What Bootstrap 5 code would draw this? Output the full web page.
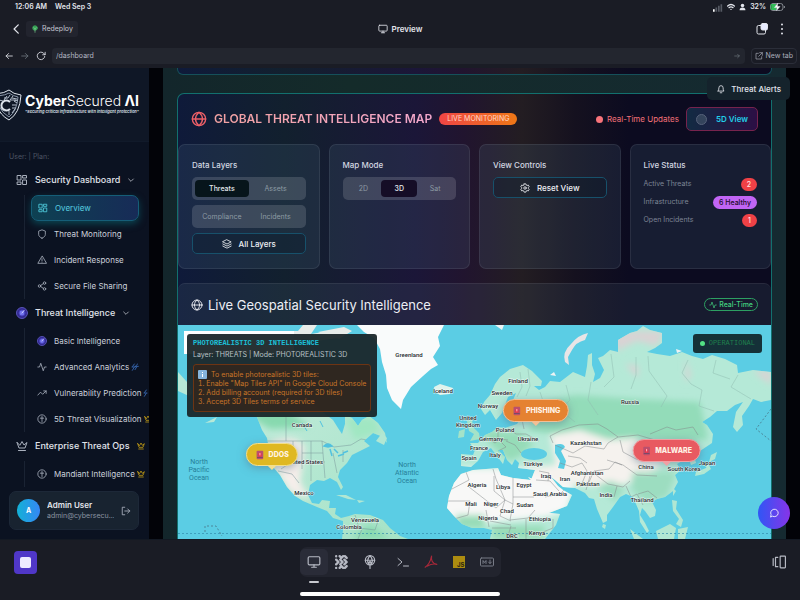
<!DOCTYPE html>
<html lang="en" data-bs-theme="dark">
<head>
<meta charset="utf-8">
<meta name="viewport" content="width=device-width, initial-scale=1">
<title>CyberSecured AI – Dashboard</title>
<link rel="stylesheet" href="https://cdn.jsdelivr.net/npm/bootstrap@5.3.0/dist/css/bootstrap.min.css">
<style>
body{background:#1a1c25;color:#e3e5ec;font-family:Inter,"Noto Sans",sans-serif;font-size:8px;line-height:12px;height:100vh;min-height:480px;overflow:hidden}
button{color:inherit;font-size:inherit;line-height:inherit}
svg.ico{width:10px;height:10px;fill:none;stroke:currentColor;stroke-width:2;stroke-linecap:round;stroke-linejoin:round;flex:none}
svg.i8{width:8px;height:8px}
svg.i12{width:12px;height:12px}
svg.i14{width:14px;height:14px}
svg.i15{width:15px}
svg.i16{width:16px;height:16px}
svg.thick{stroke-width:4}
svg.tick{color:#e5b712;margin-left:-5px}
svg.spark{color:#4787e5;margin-left:-5px}
.plain{background:none;border:0;padding:0;display:inline-flex;align-items:center}
a{color:inherit;text-decoration:none}
/* device and workspace bars */
.statusbar{height:14px;padding:0 15px;font-size:7px;font-weight:600}
.topbar{height:30px;padding:0 12px}
.redeploy{height:16px;padding:0 5px;gap:3px;background:#22242e;border-radius:3px;font-size:7px;color:#c4c7d2}
.preview-name{font-size:8px;font-weight:600}
.addressbar{height:24px;padding:0 3px 0 4px;gap:6px}
.urlbox{background:#23262f;border-radius:4px;height:16px}
.urlbox input{background:none;border:0;outline:0;color:#b4b8c4;font-size:7px;padding:0 4px}
.newtab{height:16px;padding:0 3px;gap:3px;border:1px solid #2b2e39;border-radius:4px;font-size:7px;color:#a9adb9}
/* sidebar */
.stage{background:#020308}
.sidebar{width:149px;background:#0b1221;overflow:hidden}
.brand{height:74px;background:#0f1726;border-bottom:1px solid #111a2a;gap:3px}
.brand-name{font-size:14px;line-height:15px;font-weight:700;color:#fff;white-space:nowrap}
.brand-name span{font-weight:300}
.brand-tag{font-size:4px;line-height:8px;font-weight:600;font-style:italic;color:#dfe2ea;white-space:nowrap}
.plan{font-size:7px;color:#4d5564;padding:9px 9px 3px}
.grp{height:28px;padding-left:16px;gap:7px;font-size:9px;font-weight:500;color:#e1e4eb;white-space:nowrap}
.grp>svg:first-child{color:#a9b0bd}
.sub{margin:1px 0 0 24px;padding:0;position:relative;border-left:1px solid #1a2333}
.sub a{height:26px;padding-left:12px;gap:7px;font-size:8px;color:#ccd1db;white-space:nowrap;display:flex;align-items:center}
.sub a>svg:first-child{color:#a6adba}
.sub a.on{margin:0 10px 0 6px;padding-left:6px;border:1px solid #155e78;border-radius:7px;background:linear-gradient(90deg,#0e4152,#172b57);color:#58cfe0;box-shadow:0 3px 7px #0b4350}
.sub a.on>svg:first-child{color:#50cfe0}
.usercard{position:absolute;left:9px;right:10px;bottom:9px;height:39px;border-radius:7px;background:#182330;border:1px solid #1d2838;padding:0 7px;gap:7px}
.avatar{width:23px;height:23px;border-radius:50%;background:linear-gradient(90deg,#13b1d6,#3687f5);color:#fff;font-weight:700;font-size:7px}
.uname{font-size:8px;font-weight:600;line-height:11px}
.umail{font-size:7px;line-height:10px;color:#8a93a1}
.signout{color:#aeb6c3}
/* main */
.mainarea{background:linear-gradient(90deg,#13262b,#142b2a 30%,#152a31);margin:0 14px;padding:0 14px}
.tint{background:linear-gradient(90deg,#0f1a3a 0%,#12202e 18%,#1b1638 40%,#21142f 48%,#231d22 58%,#15111f 67%,#0c0b20 76%,#0c0b20 100%)}
.prevcard{height:7px;border:1px solid #15505a;border-top:0;border-radius:0 0 6px 6px}
.panel{margin-top:18px;border:1px solid #12706e;border-bottom:0;border-radius:7px 7px 0 0}
.panel-head{height:50px;padding:0 13px;gap:7px}
.panel-head h1{font-size:12px;line-height:14px;font-weight:600;margin:0;white-space:nowrap;background:linear-gradient(90deg,#f2a1a1,#f3a8cd);-webkit-background-clip:text;background-clip:text;color:transparent}
.globe-red{color:#ee6068}
.live{background:linear-gradient(90deg,#ef4545,#ee7716);color:#ffd9c9;font-size:7px;line-height:12px;padding:0 8px;border-radius:6px;white-space:nowrap}
.rt{color:#f27178;font-size:8px;gap:4px;white-space:nowrap}
.dot{width:7px;height:7px;border-radius:50%;background:#f8737a;flex:none}
.fived{height:24px;padding:0 9px;gap:9px;border:1px solid #76234d;border-radius:5px;background:linear-gradient(90deg,#122b43,#2c0f45);color:#22cfe9;font-size:8px;font-weight:600;white-space:nowrap}
.orb{width:11px;height:11px;border-radius:50%;background:#34445c;border:1px solid #56617a}
.ctrls{display:grid;grid-template-columns:repeat(4,minmax(0,1fr));gap:9px}
.pane{height:125px;padding:14px 13px;border:1px solid #ffffff14;border-radius:7px;background:#5379902b}
.pane h2{font-size:8px;line-height:12px;font-weight:500;margin:0 0 6px;color:#d3d7e1}
.seg{height:23px;padding:3px;border-radius:5px;background:#ffffff24;margin-bottom:5px;font-size:7px;color:#8d9ba4}
.seg button{flex:1 1 0;justify-content:center;border-radius:4px}
.seg .on{background:#07151b;color:#e5e8ec;font-weight:500}
.seg.violet .on{background:#150d26}
.outl{width:100%;height:21px;border:1px solid #17516b;border-radius:5px;background:#0a182655;justify-content:center;gap:7px;font-size:8px;font-weight:500;color:#eef0f4}
.stat{height:18px;font-size:7px;color:#7d8494}
.pill{border-radius:8px;background:#ef4146;color:#ffe1e1;line-height:13px;padding:0 6px;font-size:7px;font-weight:500}
.pill.healthy{background:#c165f5;color:#1a0b2a}
.geo{margin-top:14px}
.geo-head{height:42px;padding:0 13px;gap:5px;border-top:1px solid #ffffff12;border-radius:7px 7px 0 0;background:#4c63752e}
.geo-head h2{font-size:13px;line-height:18px;font-weight:400;margin:0;white-space:nowrap;color:#eceef5}
.realtime{height:13px;padding:0 4px;gap:2px;border:1px solid #2d9f62;border-radius:7px;color:#43d27f;font-size:7px;font-weight:500;white-space:nowrap}
.map{background:#5bcde4;position:relative;overflow:hidden;min-height:0}
.map>svg{position:absolute;width:100%;height:100%}
.map text{font-family:Roboto,sans-serif;font-size:6px;font-weight:500;fill:#222a2d;text-anchor:middle;paint-order:stroke;stroke:#fffc;stroke-width:1px;stroke-linejoin:round}
.map text.sea{font-size:7px;font-weight:400;fill:#267f99;stroke:none}
.intel{position:absolute;left:9px;top:9px;width:190px;height:83px;padding:5px 6px;background:#192428ef;border-radius:3px}
.mono{font-family:"Liberation Mono",monospace;font-size:7px;line-height:9px}
.intel .mono{color:#1cc0d8;font-weight:700}
.layerline{font-size:7px;line-height:14px;color:#b9c2c6;white-space:nowrap}
.howto{margin-top:2px;border:1px solid #6d3413;border-radius:3px;background:#35251bcc;color:#c87528;padding:5px 2px 5px 4px;font-size:7px;line-height:9px;white-space:nowrap}
.howto ol{margin:0;padding:0;list-style-position:inside}
.oper{position:absolute;right:9px;top:9px;height:19px;padding:0 7px;gap:4px;border-radius:3px;background:#132b31f5;color:#1f804d}
.oper .dot{width:5px;height:5px;background:#53e184}
.pin{position:absolute;height:23px;padding:0 8px;border:1px solid #fff9;border-radius:12px;color:#fff3e6;font-size:7px;font-weight:800;gap:4px;box-shadow:0 2px 8px #5a778b88;transform:translateX(-50%)}
.pin svg{stroke-width:1}
.pin:after{content:"";position:absolute;left:50%;top:100%;margin-left:-5px;border:5px solid transparent;border-bottom:0;border-top-color:inherit}
.pin.y{background:#dfb822;border-color:#f2df8d;left:15.8%;top:118px}
.pin.o{background:#e58231;border-color:#f2bf95;left:60.4%;top:74px}
.pin.r{background:#e85a61;border-color:#f0a0a4;left:82.4%;top:114px}
.alerts{position:absolute;right:10px;top:9px;height:23px;padding:0 9px;gap:5px;background:#15232c;border-radius:5px;font-size:8px;font-weight:500}
.chat{position:absolute;right:10px;bottom:10px;width:32px;height:32px;border-radius:50%;background:linear-gradient(90deg,#3056f5,#8734e8);justify-content:center;color:#fff}
/* dock */
.dockbar{height:61px;padding:7px 14px 0;border-top:1px solid #131923}
.side{flex:1 1 0}
.dock{height:30px;border-radius:7px;background:#22242e}
.dock button{width:28px;height:26px;border-radius:5px;justify-content:center;color:#b6b9c3}
.dock .on{background:#2a2c38}
.dock .split{margin-left:5px}
.under{width:10px;height:2px;border-radius:1px;background:#c8cad0;margin:4px 0 0 9px}
.home{width:200px;height:4px;border-radius:2px;background:#fff;margin:9px 0 0}
.stopbtn{width:23px;height:23px;border-radius:4px;background:#5037c8;justify-content:center}
.stopbtn span{width:11px;height:11px;border-radius:2px;background:#eeeaff}
.c-red{color:#a62839}
.c-gray{color:#777b86}
</style>
<script src="https://cdn.jsdelivr.net/npm/bootstrap@5.3.0/dist/js/bootstrap.bundle.min.js"></script>
</head>
<body class="d-flex flex-column">
<svg width="0" height="0" class="position-absolute" aria-hidden="true">
<symbol id="grid" viewBox="0 0 24 24"><path d="M3 3h7v9H3zM14 3h7v5h-7zM14 12h7v9h-7zM3 16h7v5H3z"/></symbol>
<symbol id="shield" viewBox="0 0 24 24"><path d="M12 22c5-2 8-5 8-9V5l-8-3-8 3v8c0 4 3 7 8 9z"/></symbol>
<symbol id="warn" viewBox="0 0 24 24"><path d="M12 3 2 20h20zM12 9v5M12 17v.2"/></symbol>
<symbol id="share" viewBox="0 0 24 24"><circle cx="18" cy="5" r="3"/><circle cx="6" cy="12" r="3"/><circle cx="18" cy="19" r="3"/><path d="m9 13.500 6 4M15 6.500l-6 4"/></symbol>
<symbol id="down" viewBox="0 0 24 24"><path d="m5 9 7 7 7-7"/></symbol>
<symbol id="pulse" viewBox="0 0 24 24"><path d="M22 12h-4l-3 9L9 3l-3 9H2"/></symbol>
<symbol id="trend" viewBox="0 0 24 24"><path d="m2 17 6.500-7 5 5L22 7M16 7h6v6"/></symbol>
<symbol id="brain" viewBox="0 0 24 24"><circle cx="12" cy="12" r="10"/><path d="M12 6v12M8 10h8"/></symbol>
<symbol id="crown" viewBox="0 0 24 24"><path d="m2 5 4 11h12l4-11-6 5-4-7-4 7zM5 21h14"/></symbol>
<symbol id="globe" viewBox="0 0 24 24"><circle cx="12" cy="12" r="10"/><path d="M2 12h20M12 2c-7 6-7 14 0 20M12 2c7 6 7 14 0 20"/></symbol>
<symbol id="target" viewBox="0 0 24 24"><circle cx="12" cy="12" r="11" fill="#332a91" stroke="#5955b8"/><circle cx="12" cy="12" r="6" fill="#7173ed" stroke="#4641bd"/><path d="m12 12 4-5" stroke="#d0d2ff"/></symbol>
<symbol id="screen" viewBox="0 0 24 24"><rect x="2" y="3" width="20" height="14" rx="2"/><path d="M8 21h8M12 17v4"/></symbol>
<symbol id="siren" viewBox="0 0 12 12"><rect x="2" y="1" width="8" height="10" rx="1" fill="#b9506e" stroke="none"/><path d="M4 8V5q0-2 2-2t2 2v3z" fill="#e8364c" stroke="none"/><path d="M3 9h6" stroke="#6d4a68"/><path d="M6 4v2" stroke="#ffe0e4"/></symbol>
</svg>

<div class="statusbar d-flex align-items-center justify-content-between">
  <div><span class="me-2">12:06 AM</span><span>Wed Sep 3</span></div>
  <div class="d-flex align-items-center gap-1">
    <svg width="10" height="9" viewBox="0 0 12 10"><path fill="#fff" d="M0 7h2v3H0z"/><path fill="#565a64" d="M3 5h2v5H3zM6 3h2v7H6zM9 1h2v9H9z"/></svg>
    <svg class="ico i8 thick" viewBox="0 0 24 24"><path d="M2 9q10-9 20 0M6 14q6-5 12 0M12 19v.2"/></svg>
    <svg width="7" height="8" viewBox="0 0 24 24"><circle cx="12" cy="7" r="6" fill="#e3e5ec"/><path fill="#e3e5ec" d="M2 23q0-9 10-9t10 9z"/></svg>
    <span>32%</span>
    <svg class="ico i15" viewBox="0 0 30 18"><rect x="1" y="2" width="25" height="14" rx="5" stroke="#868b93"/><path d="M3 4h9v10H3z" fill="#32bd58" stroke="#32bd58"/><path d="m15 2-6 8h5l-1 6 7-8h-5z" fill="#fff" stroke-width="1"/><path d="M29 8v2" stroke="#868b93"/></svg>
  </div>
</div>

<header class="topbar d-flex align-items-center">
  <div class="side d-flex align-items-center gap-1">
    <button class="plain" aria-label="Back"><svg class="ico" viewBox="0 0 24 24"><path stroke-width="3" d="M15 2 5 12l10 10"/></svg></button>
    <button class="plain redeploy"><svg class="ico i8" viewBox="0 0 24 24"><circle cx="12" cy="9" r="7" fill="#2d9c4c" stroke="#43b563"/><path d="M12 8v14M8 8l4 5 4-5" stroke="#7cc890"/></svg>Redeploy</button>
  </div>
  <div class="d-flex align-items-center gap-1 preview-name"><svg class="ico"><use href="#screen"/></svg>Preview</div>
  <div class="side d-flex align-items-center justify-content-end gap-2">
    <button class="plain" aria-label="Windows"><svg class="ico i12" viewBox="0 0 24 24"><path d="M10 5H5a3 3 0 0 0-3 3v11a3 3 0 0 0 3 3h11a3 3 0 0 0 3-3v-5"/><rect x="10" y="1" width="13" height="13" rx="3" fill="#e8ebff"/></svg></button>
    <button class="plain" aria-label="More"><svg class="ico i12 thick" viewBox="0 0 24 24"><path d="M12 3v.1M12 12v.1M12 21v.1"/></svg></button>
  </div>
</header>

<div class="addressbar d-flex align-items-center">
  <button class="plain" aria-label="Previous page"><svg class="ico" viewBox="0 0 24 24"><path d="M20 12H5M11 6l-6 6 6 6"/></svg></button>
  <button class="plain text-secondary" aria-label="Next page"><svg class="ico" viewBox="0 0 24 24"><path d="M4 12h15M13 6l6 6-6 6"/></svg></button>
  <button class="plain" aria-label="Reload"><svg class="ico" viewBox="0 0 24 24"><path d="M21 13a9 9 0 1 1-3-8l4 4M22 3v6h-6"/></svg></button>
  <div class="urlbox flex-grow-1 d-flex align-items-center pe-1">
    <input class="flex-grow-1" type="text" value="/dashboard" aria-label="Address">
    <button class="plain text-secondary" aria-label="Go"><svg class="ico i8" viewBox="0 0 24 24"><path d="M5 12h14M14 7l5 5-5 5"/></svg></button>
  </div>
  <button class="plain newtab"><svg class="ico i8" viewBox="0 0 24 24"><path d="M10 4H3v17h17v-7M14 2h8v8M22 2 11 13"/></svg>New tab</button>
</div>

<div class="stage d-flex flex-grow-1 position-relative overflow-hidden">
  <nav class="sidebar position-relative flex-shrink-0" aria-label="Sections">
    <div class="brand d-flex align-items-center">
      <svg width="22" height="32" viewBox="0 0 22 32" fill="none" stroke="#dfe5ed" stroke-width="1"><path d="M-4 5Q5 4 9 1q4 4 12 5-1 18-12 25Q0 26-3 17z"/><path d="M-2 7Q6 6 9 4q4 3 9 4-1 14-9 20-7-4-10-11" stroke="#8793a5"/><path d="M10 13a5 5 0 1 0 0 7" stroke-width="2"/><path d="M4 9h4l2-3M13 7l-3 4h6M18 11l-4 1 3 2M16 16h-4M16 19h-4M9 26v-4M12 24l3-4M3 12l-4-1M5 22l-4-2M7 7l-3 4M12 9l5 1" stroke="#b3bdca"/></svg>
      <div><div class="brand-name">Cyber<span>Secured</span> ΛI</div><div class="brand-tag">"Securing critical infrastructure with intelligent protection"</div></div>
    </div>
    <div class="plan">User: | Plan:</div>
    <a class="grp d-flex align-items-center" href="#"><svg class="ico i12"><use href="#grid"/></svg>Security Dashboard<svg class="ico i8 ms-n1"><use href="#down"/></svg></a>
    <div class="sub">
      <a class="on" href="#"><svg class="ico"><use href="#grid"/></svg>Overview</a>
      <a href="#"><svg class="ico"><use href="#shield"/></svg>Threat Monitoring</a>
      <a href="#"><svg class="ico"><use href="#warn"/></svg>Incident Response</a>
      <a href="#"><svg class="ico"><use href="#share"/></svg>Secure File Sharing</a>
    </div>
    <a class="grp d-flex align-items-center" href="#"><svg class="ico i12"><use href="#target"/></svg>Threat Intelligence<svg class="ico i8"><use href="#down"/></svg></a>
    <div class="sub">
      <a href="#"><svg class="ico"><use href="#target"/></svg>Basic Intelligence</a>
      <a href="#"><svg class="ico"><use href="#pulse"/></svg>Advanced Analytics<svg class="ico i8 spark" viewBox="0 0 24 24"><path d="m4 22 5-8M12 20l5-8M5 10l5-7M14 9l6-6M3 12h9M12 10h10"/></svg></a>
      <a href="#"><svg class="ico"><use href="#trend"/></svg>Vulnerability Prediction<svg class="ico i8 spark" viewBox="0 0 24 24"><path d="m4 22 5-8M5 10l5-7M3 12h9"/></svg></a>
      <a href="#"><svg class="ico"><use href="#brain"/></svg>5D Threat Visualization<svg class="ico i8 tick"><use href="#crown"/></svg></a>
    </div>
    <a class="grp d-flex align-items-center" href="#"><svg class="ico i12"><use href="#crown"/></svg>Enterprise Threat Ops<svg class="ico i8 tick ms-0"><use href="#crown"/></svg></a>
    <div class="sub">
      <a href="#"><svg class="ico"><use href="#brain"/></svg>Mandiant Intelligence<svg class="ico i8 tick"><use href="#crown"/></svg></a>
    </div>
    <div class="usercard d-flex align-items-center">
      <span class="avatar d-flex align-items-center justify-content-center flex-shrink-0">A</span>
      <div class="flex-grow-1 overflow-hidden"><div class="uname">Admin User</div><div class="umail">admin@cybersecu...</div></div>
      <button class="plain signout" aria-label="Sign out"><svg class="ico" viewBox="0 0 24 24"><path d="M9 3H3v18h6M16 7l5 5-5 5M21 12H9"/></svg></button>
    </div>
  </nav>

  <main class="mainarea flex-grow-1 d-flex flex-column overflow-hidden">
    <div class="prevcard tint flex-shrink-0"></div>
    <section class="panel tint flex-grow-1 d-flex flex-column">
      <div class="panel-head d-flex align-items-center flex-shrink-0">
        <svg class="ico i16 globe-red"><use href="#globe"/></svg>
        <h1>GLOBAL THREAT INTELLIGENCE MAP</h1>
        <span class="live">LIVE MONITORING</span>
        <span class="rt d-flex align-items-center ms-auto"><span class="dot"></span>Real-Time Updates</span>
        <button class="plain fived"><span class="orb"></span>5D View</button>
      </div>
      <div class="ctrls flex-shrink-0">
        <div class="pane">
          <h2>Data Layers</h2>
          <div class="seg d-flex"><button class="plain on">Threats</button><button class="plain">Assets</button></div>
          <div class="seg d-flex"><button class="plain">Compliance</button><button class="plain">Incidents</button></div>
          <button class="plain outl"><svg class="ico" viewBox="0 0 24 24"><path d="m12 2 10 5-10 5L2 7zM2 12l10 5 10-5M2 17l10 5 10-5"/></svg>All Layers</button>
        </div>
        <div class="pane">
          <h2>Map Mode</h2>
          <div class="seg violet d-flex"><button class="plain">2D</button><button class="plain on">3D</button><button class="plain">Sat</button></div>
        </div>
        <div class="pane">
          <h2>View Controls</h2>
          <button class="plain outl"><svg class="ico" viewBox="0 0 24 24"><path d="M10 2h4l1 3 2 1 3-1 2 4-2 2v2l2 2-2 4-3-1-2 1-1 3h-4l-1-3-2-1-3 1-2-4 2-2v-2L2 9l2-4 3 1 2-1z"/><circle cx="12" cy="12" r="3"/></svg>Reset View</button>
        </div>
        <div class="pane">
          <h2 class="mb-1">Live Status</h2>
          <div class="stat d-flex align-items-center justify-content-between">Active Threats<span class="pill">2</span></div>
          <div class="stat d-flex align-items-center justify-content-between">Infrastructure<span class="pill healthy">6 Healthy</span></div>
          <div class="stat d-flex align-items-center justify-content-between">Open Incidents<span class="pill">1</span></div>
        </div>
      </div>
      <div class="geo flex-grow-1 d-flex flex-column">
        <div class="geo-head d-flex align-items-center flex-shrink-0">
          <svg class="ico i12"><use href="#globe"/></svg><h2>Live Geospatial Security Intelligence</h2>
          <span class="realtime d-flex align-items-center ms-auto"><svg class="ico i8"><use href="#pulse"/></svg>Real-Time</span>
        </div>
        <div class="map flex-grow-1">
          <svg viewBox="178 325 593 214" preserveAspectRatio="xMidYMid slice" role="img" aria-label="World map">
            <defs>
              <linearGradient id="na" x1="0" x2="1" y1="0" y2="1"><stop offset="0" stop-color="#a5e5c8"/><stop offset=".3" stop-color="#c1ebdb"/><stop offset="1" stop-color="#a4e2c5"/></linearGradient>
              <filter id="soft" x="-20%" y="-20%" width="140%" height="140%"><feGaussianBlur stdDeviation="3"/></filter>
              <clipPath id="nac"><path d="M205 400 240 406 257 417 262 430 267 438 270 455 273 467 280 475 287 487 295 496 303 501 317 507 327 511 333 518 343 521 343 530 342 539H408L400 536 390 528 383 520 370 515 355 514 349 516 341 518 335 514 336 508 329 508 330 501 322 500 319 504 312 503 308 495 310 485 317 480 324 481 330 478 337 482 341 490 343 487 338 477 340 470 347 463 352 455 362 450 370 446 364 441 373 433 383 437 387 443 385 433 378 423 369 416 362 420 358 426 352 418 345 415 345 424 342 434 338 428 333 420 320 410 300 390H230z"/></clipPath>
              <clipPath id="eac"><path d="M481 409 484 402 490 395 495 384 500 377 510 369 523 365 532 371 542 381 541 386 534 386 539 390 545 387 550 381 560 382 573 372 585 377 587 366 588 355 592 353 592 365 595 374 593 382 600 378 604 370 598 358 603 356 610 350 618 352 618 340 630 333 637 331 643 326 650 330 662 333 662 343 655 348 647 352 657 354 670 356 682 352 692 356 703 359 712 355 725 359 737 365 738 373 753 370 771 372V400L761 402 753 399 749 406 742 416 743 425 737 432 733 427 736 412 743 402 735 405 727 411 717 411 710 417 702 422 707 425 713 434 712 443 703 449 694 455 696 463 691 465 688 456 680 455 684 460 677 464 681 470 675 475 678 482 673 491 665 497 657 499 652 502 656 510 655 516 650 518 645 511 642 508 640 515 645 523 649 531 647 533 640 522 639 511 633 497 626 494 620 497 613 507 607 515 607 521 603 523 597 509 594 499 589 498 585 493 575 488 563 487 555 480 551 477 558 486 563 490 572 495 567 506 549 513 544 505 538 494 531 480 528 477 535 480 542 498 551 513 560 514 556 525 545 539H490L492 530 484 528 472 528 462 524 454 516 447 508 449 496 454 483 461 474 473 470 486 469 498 468 501 475 513 478 531 480 535 470 518 468 519 463 515 459 512 465 507 460 503 450 498 450 505 457 503 464 497 456 491 448 483 452 478 461 471 467 461 466 461 454 473 455 475 450 470 443 478 443 485 435 492 432 498 427 505 428 517 424 522 416 529 411 520 411 511 405 516 393 508 397 502 413 496 420 490 410 485 415z"/></clipPath>
            </defs>
            <g clip-path="url(#nac)"><path d="M178 325h240v214H178z" fill="url(#na)"/><g filter="url(#soft)"><path d="M270 442q25-10 35 5l-5 35 10 17-20-7-22-34z" fill="#f5eeea"/><path d="M230 405h50l30 22-40 2zM340 450l-10 27M370 525l20 14h-40z" fill="#87d9af"/><path d="M345 418h30l5 14-25 8z" fill="#a0e7c2"/></g>
              <path d="M264 441h58l12 6 17-2 10-6 13 2M286 417v24M293 441v20l-12 8M302 441v28M311 441v40M322 441l3 37M302 453h21M293 462h32M278 471l14 3 7 9M333 453l4 20M343 450v12M355 515l4 13 16 2 3-9M362 529l-4 10" fill="none" stroke="#78969a" stroke-width=".5"/>
              <path d="M324 446q4-4 8 0l-4 1zM330 449l2 7M334 449l4 4M338 456l6-2M343 453l5-2" fill="#52c2df" stroke="#52c2df" stroke-width="1.500"/><path d="M320 421l3 6M302 423l5 8" stroke="#52c2df"/></g>
            <path d="M357 325 364 332 374 338 380 349 382 362 386 375 387 388 392 400 401 409 403 400 411 387 423 376 431 369 438 365 433 357 440 346 438 337 444 325z" fill="#f9fbfb"/>
            <path d="M178 372l9 10q9 12 2 14l-11-5z" fill="#b7e8d7"/><path d="M205 423l12-6-3 5z" fill="#b7e8d7"/><path d="M275 331h23l5-6h14l-6 9 18-3 9 7-22 3-12-2-16 5zM318 332l26-5 8 4-13 8z" fill="#e8ece9"/>
            <path d="M434 387l6-3 13 4-3 6-10 1-5-3z" fill="#dff3ec"/>
            <path d="M467 421l5-2 1 8 6 6 1 6-10 2 4-7-5-3zM459 431l6-2-1 8-6 1z" fill="#a4e3c8"/>
            <g clip-path="url(#eac)"><path d="M440 325h331v214H440z" fill="#b5e9d7"/>
              <g filter="url(#soft)"><path d="M545 402l30-7 60 4 65 3 8 37-30 4-40-5-50 2-60-10z" fill="#93dcb9"/><path d="M440 468h92l42 18-7 25-20 6-65 6-42-3z" fill="#f8f8f7"/><path d="M550 435l30-5 30 10 25-2 15 14 16 5-10 12-33 16-27 1-35-3-25-6-10-10 30-2z" fill="#f5f2ee"/><path d="M612 331h53l-8 15-20-5-20 10zM625 364l13 2v12zM685 358l6 17-5 8zM704 395l12 12M753 371h18v14z" fill="#d9d3d4"/><path d="M632 472h45l-10 25-20 6-15-13zM596 486l14-5 15 5-9 16z" fill="#9cddc0"/><path d="M492 526h52v13h-52zM455 515h30v13h-25z" fill="#97dcb7"/><path d="M481 430l38 2 15 12-15 13-10 4-17-15z" fill="#96dcb8"/></g>
              <ellipse cx="534" cy="454" rx="13" ry="6" fill="#5bcde4"/><path d="M555 445q8-3 10 2l-4 4 5 10-2 8-6-1 2-7-5-8z" fill="#5bcde4"/>
              <g fill="none" stroke="#85898b" stroke-width=".5"><path d="M466 472l3 8-19 10M469 487l27 21 9-8-9-21-3-10M448 501h22l-2 14-14 4M494 476v15l11 9M513 478v19h21M505 500l8 4v-7M505 500l-5 16 11 5M513 504l-3 16 18-2 7-8M486 510l3 17M490 521l21 4M526 519v20M511 526l-4 13M553 519v9l-10 4M492 528h24M536 480l14 1 9 10M545 497l15-3 6-6M539 471l10 2-1 8M560 463l12 4 10-4 5 8-6 15M568 456l12 2 7 5M580 486l9-4 5-11 15-2 6-7 7 3M596 475l12 9 15 3 7-6M617 486l-3 11M626 486l5 11 6-3 6 11M638 494l10-3 9 7M590 476l-4 14"/><path d="M553 443l-3-7 12-6 17-5 19-1 9 5 11 8-10 6-4 6-19-3-12 7-18-8M618 437l20-2 17 5 19 3 8-3M620 440l3 12 13 7 24 1 14-8 3-9M650 434l17-7 9 3 17-3 5 8M607 460l16 5 14 10 20 1M485 437l10 6 4-3 7 7-8 4M498 427v12l10 1M508 428l8 6 10 0 13 7M506 441l9 4 6 8M521 415l3 14"/><path d="M520 372l2 15-5 10M528 369l2 17-4 10M540 392l5 15-7 10M566 385l4 15-10 10 15 12M591 382l-3 18 10 15M611 354l3 23-10 10M636 357v18l-5 14M648 356l1 15 18 25-6 11M688 360l-6 13 9 11 11 6-3 16 15 5M716 360l-3 13 17 6M738 375l-7 12 20 12" stroke="#91bdb0"/></g></g>
            <path d="M565 362q-3-10 6-18 7-9 17-11l-3 7q-9 2-13 10l-4 7 1 8z" fill="#e8e5e6"/><path d="M495 325h9l-2 5zM550 375l4-3 2 4zM676 349l6 2-5 2z" fill="#eef3f3"/>
            <path d="M711 455l6-3-2 7-6 3zM708 463l3 6-7 5-9 2 1-4 10-4zM673 488l3 3-3 5zM672 500l5 1-1 8 7 11-2 7-5-3 3-5-6-8zM656 531l14-7 6 4-2 11h-16zM630 529l13 10h-9zM678 529l10-2-3 12h-7zM336 495l10 0 10 5-8-1zM357 500l8 1-6 2zM382 433l5 5-3 7-8-4zM603 524l3 1-1 4-3-2z" fill="#b1e7d3"/>
            <g stroke="#328cae" fill="none" stroke-dasharray="2 2" stroke-width=".7"><path d="M178 533.500h593"/><path d="M205 532v-6h11l6 10M771 409l-15 20 15 12" stroke="#456c7b"/></g>
            <g><text x="409" y="357">Greenland</text><text x="443" y="393">Iceland</text><text x="518" y="383">Finland</text><text x="502" y="395">Sweden</text><text x="488" y="408">Norway</text><text x="630" y="404">Russia</text><text x="468" y="420">United</text><text x="468" y="427">Kingdom</text><text x="505" y="432">Poland</text><text x="491" y="441">Germany</text><text x="528" y="441">Ukraine</text><text x="479" y="450">France</text><text x="495" y="457">Italy</text><text x="469" y="460">Spain</text><text x="533" y="466">Türkiye</text><text x="586" y="445">Kazakhstan</text><text x="587" y="475">Afghanistan</text><text x="588" y="486">Pakistan</text><text x="546" y="478">Iraq</text><text x="565" y="481">Iran</text><text x="524" y="487">Egypt</text><text x="503" y="489">Libya</text><text x="477" y="487">Algeria</text><text x="550" y="496">Saudi Arabia</text><text x="606" y="497">India</text><text x="642" y="502">Thailand</text><text x="646" y="469">China</text><text x="684" y="471">South Korea</text><text x="707" y="465">Japan</text><text x="471" y="506">Mali</text><text x="491" y="506">Niger</text><text x="507" y="513">Chad</text><text x="525" y="507">Sudan</text><text x="488" y="520">Nigeria</text><text x="540" y="521">Ethiopia</text><text x="537" y="535">Kenya</text><text x="512" y="538">DRC</text><text x="302" y="427">Canada</text><text x="305" y="464">United States</text><text x="304" y="495">Mexico</text><text x="365" y="522">Venezuela</text><text x="349" y="529">Colombia</text></g>
            <text class="sea" x="199" y="464">North</text><text class="sea" x="199" y="472">Pacific</text><text class="sea" x="199" y="480">Ocean</text><text class="sea" x="407" y="467">North</text><text class="sea" x="407" y="475">Atlantic</text><text class="sea" x="407" y="483">Ocean</text>
            <path d="M184 331h110v23H184z" fill="#fff"/>
          </svg>
          <div class="intel">
            <div class="mono">PHOTOREALISTIC 3D INTELLIGENCE</div>
            <div class="layerline">Layer: THREATS | Mode: PHOTOREALISTIC 3D</div>
            <div class="howto">
              <div class="d-flex align-items-center gap-1"><svg width="9" height="9" viewBox="0 0 9 9"><rect width="9" height="9" rx="1" fill="#86b4dc"/><path d="M4.500 2v1M4.500 4v3" stroke="#fff" stroke-width="1"/></svg>To enable photorealistic 3D tiles:</div>
              <ol><li>Enable "Map Tiles API" in Google Cloud Console</li><li>Add billing account (required for 3D tiles)</li><li>Accept 3D Tiles terms of service</li></ol>
            </div>
          </div>
          <div class="oper mono d-flex align-items-center"><span class="dot"></span>OPERATIONAL</div>
          <button class="plain pin y"><svg class="ico"><use href="#siren"/></svg>DDOS</button>
          <button class="plain pin o"><svg class="ico"><use href="#siren"/></svg>PHISHING</button>
          <button class="plain pin r"><svg class="ico"><use href="#siren"/></svg>MALWARE</button>
        </div>
      </div>
    </section>
  </main>
  <button class="plain alerts"><svg class="ico" viewBox="0 0 24 24"><path d="M5 17h14q-2-2-2-8a5 5 0 0 0-10 0q0 6-2 8M10 21h4"/></svg>Threat Alerts</button>
  <button class="plain chat" aria-label="Open chat"><svg class="ico" viewBox="0 0 24 24"><path d="M4 21l1-5a9 9 0 1 1 4 4z"/></svg></button>
</div>

<footer class="dockbar d-flex align-items-start flex-shrink-0">
  <div class="side pt-1"><button class="plain stopbtn" aria-label="Stop"><span></span></button></div>
  <div>
    <div class="dock d-flex align-items-center">
      <button class="plain on" aria-label="Preview"><svg class="ico i14"><use href="#screen"/></svg></button>
      <button class="plain" aria-label="Agent"><svg class="ico i14" viewBox="0 0 24 24"><g stroke-width="4"><path d="M2 2v.1M8 2l3 3 3-3M17 2l3 3M2 8l4 4-4 4M9 8l4 4-4 4M16 8l4 4-4 4M2 22v.1M8 22l3-3 3 3M17 22l3-3"/></g></svg></button>
      <button class="plain" aria-label="Deployments"><svg class="ico i14" viewBox="0 0 24 24"><circle cx="12" cy="9" r="8"/><path d="M4 9h16M12 1q-7 8-2 15M12 1q7 8 2 15M12 12v11M9 14l3-3 3 3"/></svg></button>
      <button class="plain split" aria-label="Shell"><svg class="ico i12" viewBox="0 0 24 24"><path d="m2 5 8 7-8 7M13 20h10"/></svg></button>
      <button class="plain" aria-label="PDF"><svg class="ico i14 c-red" viewBox="0 0 24 24"><path d="M2 21q8-5 11-19-2 12 9 14-8-2-16 3"/></svg></button>
      <button class="plain" aria-label="JavaScript file"><svg width="12" height="12" viewBox="0 0 12 12"><path d="M0 0h12v12H0z" fill="#ad8c10"/><text x="4" y="11" font-size="6" font-weight="700" fill="#2b260f">JS</text></svg></button>
      <button class="plain" aria-label="Markdown file"><svg class="ico i14 c-gray" viewBox="0 0 28 18"><rect x="1" y="1" width="26" height="16" rx="2"/><path d="M6 12V6l3 4 3-4v6M20 5v7M17 9l3 3 3-3"/></svg></button>
    </div>
    <div class="under"></div>
    <div class="home"></div>
  </div>
  <div class="side text-end pt-2"><button class="plain" aria-label="Toggle side panel"><svg class="ico i14" viewBox="0 0 24 24"><g stroke="#b6b9c3"><rect x="14" y="2" width="9" height="20" rx="1"/><path d="M10 4H6v16h4M2 6v12"/></g></svg></button></div>
</footer>
</body>
</html>
